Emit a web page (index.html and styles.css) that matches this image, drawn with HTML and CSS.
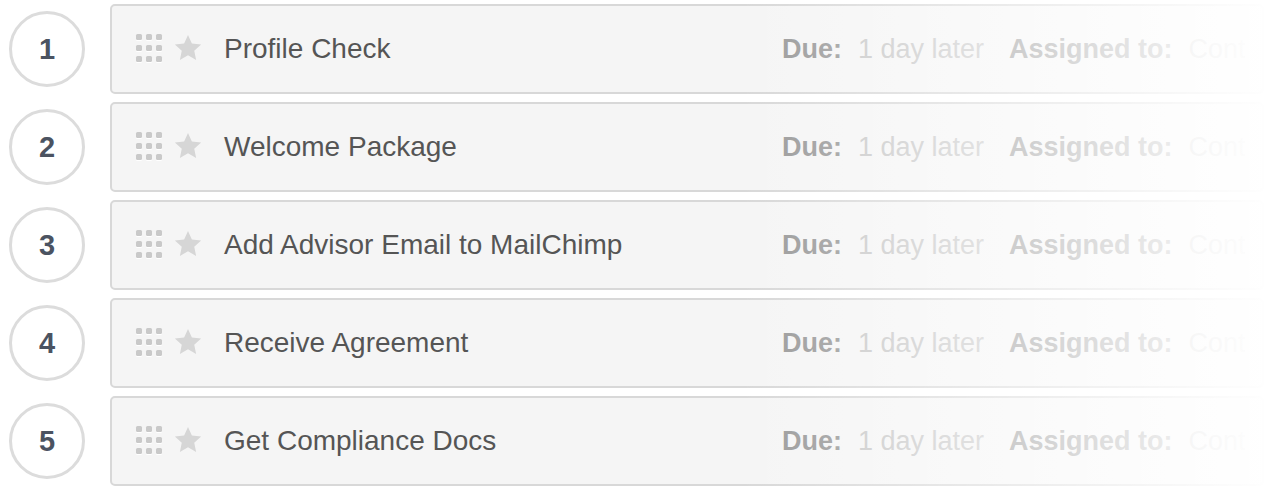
FILE: index.html
```html
<!doctype html>
<html>
<head>
<meta charset="utf-8">
<title>steps</title>
<link rel="stylesheet" href="styles.css">
</head>
<body>
	<div class="steps">
		<div class="step">
			<div class="num">1</div>
			<div class="card">
				<div class="grip"><i></i><i></i><i></i><i></i><i></i><i></i><i></i><i></i><i></i></div>
				<svg class="star" viewBox="0 0 24 24"><polygon points="12,1.5 15.1,8.3 22.5,9.1 17,14.1 18.5,21.5 12,17.8 5.5,21.5 7,14.1 1.5,9.1 8.9,8.3"/></svg>
				<div class="title">Profile Check</div>
				<div class="meta"><b>Due:</b><span class="val">1 day later</span><b class="as">Assigned to:</b><span class="val">Contact</span></div>
			</div>
		</div>
		<div class="step">
			<div class="num">2</div>
			<div class="card">
				<div class="grip"><i></i><i></i><i></i><i></i><i></i><i></i><i></i><i></i><i></i></div>
				<svg class="star" viewBox="0 0 24 24"><polygon points="12,1.5 15.1,8.3 22.5,9.1 17,14.1 18.5,21.5 12,17.8 5.5,21.5 7,14.1 1.5,9.1 8.9,8.3"/></svg>
				<div class="title">Welcome Package</div>
				<div class="meta"><b>Due:</b><span class="val">1 day later</span><b class="as">Assigned to:</b><span class="val">Contact</span></div>
			</div>
		</div>
		<div class="step">
			<div class="num">3</div>
			<div class="card">
				<div class="grip"><i></i><i></i><i></i><i></i><i></i><i></i><i></i><i></i><i></i></div>
				<svg class="star" viewBox="0 0 24 24"><polygon points="12,1.5 15.1,8.3 22.5,9.1 17,14.1 18.5,21.5 12,17.8 5.5,21.5 7,14.1 1.5,9.1 8.9,8.3"/></svg>
				<div class="title">Add Advisor Email to MailChimp</div>
				<div class="meta"><b>Due:</b><span class="val">1 day later</span><b class="as">Assigned to:</b><span class="val">Contact</span></div>
			</div>
		</div>
		<div class="step">
			<div class="num">4</div>
			<div class="card">
				<div class="grip"><i></i><i></i><i></i><i></i><i></i><i></i><i></i><i></i><i></i></div>
				<svg class="star" viewBox="0 0 24 24"><polygon points="12,1.5 15.1,8.3 22.5,9.1 17,14.1 18.5,21.5 12,17.8 5.5,21.5 7,14.1 1.5,9.1 8.9,8.3"/></svg>
				<div class="title">Receive Agreement</div>
				<div class="meta"><b>Due:</b><span class="val">1 day later</span><b class="as">Assigned to:</b><span class="val">Contact</span></div>
			</div>
		</div>
		<div class="step">
			<div class="num">5</div>
			<div class="card">
				<div class="grip"><i></i><i></i><i></i><i></i><i></i><i></i><i></i><i></i><i></i></div>
				<svg class="star" viewBox="0 0 24 24"><polygon points="12,1.5 15.1,8.3 22.5,9.1 17,14.1 18.5,21.5 12,17.8 5.5,21.5 7,14.1 1.5,9.1 8.9,8.3"/></svg>
				<div class="title">Get Compliance Docs</div>
				<div class="meta"><b>Due:</b><span class="val">1 day later</span><b class="as">Assigned to:</b><span class="val">Contact</span></div>
			</div>
		</div>
	</div>
</body>
</html>
```

FILE: styles.css
```css
body{
	margin: 0;
	background: #fff;
	font-family: "Liberation Sans", Arial, sans-serif;
}
.steps{
	position: relative;
	display: flex;
	flex-direction: column;
	gap: 8px;
	padding: 4px 0 0 9px;
	overflow: hidden;
}
/* fade out to the right */
.steps::after{
	content: "";
	position: absolute;
	top: 0;
	bottom: 0;
	left: 740px;
	right: 0;
	background: linear-gradient(90deg, rgba(255,255,255,0) 0%, rgba(255,255,255,.3) 30%, rgba(255,255,255,.7) 70%, rgba(255,255,255,.9) 90%, #fff 100%);
}
.step{
	display: flex;
	align-items: center;
	gap: 25px;
}
.num{
	width: 70px;
	height: 70px;
	border: 3px solid #dcdcdc;
	border-radius: 50%;
	display: flex;
	align-items: center;
	justify-content: center;
	font-size: 29px;
	font-weight: 700;
	color: #4b5361;
	flex: none;
}
.card{
	flex: none;
	width: 1154px;
	height: 90px;
	border: 2px solid #d8d8d8;
	border-radius: 5px;
	background: #f5f5f5;
	display: flex;
	align-items: center;
	padding-left: 24px;
	box-sizing: border-box;
	overflow: hidden;
}
.grip{
	flex: none;
	display: grid;
	grid-template-columns: repeat(3, 6px);
	grid-auto-rows: 6px;
	column-gap: 4px;
	row-gap: 5px;
	margin-top: -2px;
}
.grip i{
	background: #c9c9c9;
	border-radius: 1.5px;
	box-shadow: 0 1px 0 #fff;
}
.star{
	flex: none;
	width: 30px;
	height: 30px;
	fill: #d6d6d6;
	margin-left: 11px;
	margin-top: -2px;
}
.title{
	flex: none;
	width: 558px;
	margin-left: 21px;
	font-size: 28px;
	color: #555;
	white-space: nowrap;
}
.meta{
	flex: none;
	width: 463px;
	overflow: hidden;
	font-size: 27px;
	white-space: nowrap;
}
.meta b{
	color: #9a9a9a;
}
.meta .val{
	color: #c8c8c8;
	margin-left: 16px;
}
.meta .as{
	margin-left: 25px;
}
```
